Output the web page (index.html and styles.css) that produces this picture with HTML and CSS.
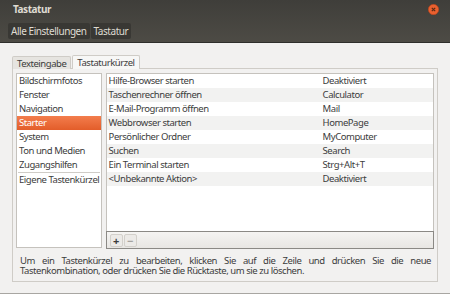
FILE: index.html
```html
<!DOCTYPE html>
<html lang="de">
<head>
    <meta charset="UTF-8">
    <title>Tastatur</title>
    <link rel="stylesheet" href="styles.css">
</head>
<body>
    <div class="window">
        <div class="header">
            <div class="titlebar">
                <span class="title">Tastatur</span>
                <span class="close">
                    <svg width="11" height="11" viewBox="0 0 11 11">
                        <circle cx="5.5" cy="5.5" r="5.2" fill="#e9602f" stroke="#b8431c" stroke-width="0.6"/>
                        <path d="M3.8 3.8 L7.2 7.2 M7.2 3.8 L3.8 7.2" stroke="#5a2a14" stroke-width="1.2"/>
                    </svg>
                </span>
            </div>
            <div class="crumbs">
                <span class="crumb">Alle Einstellungen</span>
                <span class="crumb">Tastatur</span>
            </div>
        </div>
        <div class="content">
            <div class="tabs">
                <span class="tab">Texteingabe</span>
                <span class="tab active">Tastaturkürzel</span>
            </div>
            <div class="page">
                <div class="panes">
                    <ul class="sections">
                        <li>Bildschirmfotos</li>
                        <li>Fenster</li>
                        <li>Navigation</li>
                        <li class="selected">Starter</li>
                        <li>System</li>
                        <li>Ton und Medien</li>
                        <li>Zugangshilfen</li>
                        <li class="custom">Eigene Tastenkürzel</li>
                    </ul>
                    <div class="shortcuts">
                        <div class="rows">
                            <div class="row"><span class="action">Hilfe-Browser starten</span><span class="key">Deaktiviert</span></div>
                            <div class="row"><span class="action">Taschenrechner öffnen</span><span class="key">Calculator</span></div>
                            <div class="row"><span class="action">E-Mail-Programm öffnen</span><span class="key">Mail</span></div>
                            <div class="row"><span class="action">Webbrowser starten</span><span class="key">HomePage</span></div>
                            <div class="row"><span class="action">Persönlicher Ordner</span><span class="key">MyComputer</span></div>
                            <div class="row"><span class="action">Suchen</span><span class="key">Search</span></div>
                            <div class="row"><span class="action">Ein Terminal starten</span><span class="key">Strg+Alt+T</span></div>
                            <div class="row"><span class="action">&lt;Unbekannte Aktion&gt;</span><span class="key">Deaktiviert</span></div>
                        </div>
                        <div class="toolbar">
                            <span class="tool">+</span>
                            <span class="tool dim">&minus;</span>
                        </div>
                    </div>
                </div>
                <p class="hint">Um ein Tastenkürzel zu bearbeiten, klicken Sie auf die Zeile und drücken Sie die neue Tastenkombination, oder drücken Sie die Rücktaste, um sie zu löschen.</p>
            </div>
        </div>
    </div>
</body>
</html>
```

FILE: styles.css
```css
body {
    margin: 0;
    font-family: "Noto Sans", "DejaVu Sans", sans-serif;
    font-size: 9.5px;
    letter-spacing: -0.45px;
    color: #3c3c3c;
    background: #f2f1f0;
}
.window {
    width: 450px;
    height: 294px;
    box-sizing: border-box;
    border-bottom: 1px solid #a8a6a2;
    background: #f2f1f0;
}
.header {
    height: 43px;
    background: linear-gradient(#3f3e3a, #4d4b45);
    border-bottom: 1px solid #2f2e2b;
    box-sizing: border-box;
}
.titlebar {
    height: 18px;
    display: flex;
    align-items: center;
    justify-content: space-between;
    padding: 0 11px 0 13px;
}
.title {
    color: #dfdbd2;
    font-weight: bold;
    font-size: 10px;
}
.close {
    display: flex;
}
.crumbs {
    display: flex;
    gap: 1px;
    padding-left: 8px;
    margin-top: 5px;
}
.crumb {
    height: 16px;
    line-height: 16px;
    padding: 0 3px;
    background: #393834;
    color: #dfdbd2;
    border-radius: 2px;
    font-size: 10px;
}
.content {
    padding: 12px 12px 0 12px;
}
.tabs {
    display: flex;
    height: 13px;
    gap: 1px;
}
.tab {
    padding: 0 4px;
    line-height: 13px;
    background: #e6e4e0;
    border: 1px solid #cfccc7;
    border-bottom: none;
    border-radius: 2px 2px 0 0;
    box-sizing: border-box;
    height: 13px;
    margin-top: 1px;
}
.tab.active {
    background: #f7f7f6;
    height: 14px;
    margin-top: 0;
}
.page {
    height: 214px;
    box-sizing: border-box;
    border: 1px solid #cfccc7;
    background: #f2f1f0;
    padding: 4px 3px 0 3px;
}
.panes {
    display: flex;
    gap: 4px;
}
.sections {
    list-style: none;
    margin: 0;
    padding: 0;
    width: 86px;
    height: 175px;
    box-sizing: border-box;
    background: #fff;
    border: 1px solid #c5c2bd;
}
.sections li {
    height: 14px;
    line-height: 14px;
    padding-left: 2px;
    white-space: nowrap;
}
.sections li.selected {
    background: linear-gradient(#f37d4d, #e35d2a);
    color: #fff;
}
.sections li.custom {
    border-top: 1px solid #cfccc7;
    margin: 0 1px;
    padding-left: 1px;
}
.shortcuts {
    width: 330px;
    height: 176px;
    display: flex;
    flex-direction: column;
}
.rows {
    flex: 1;
    background: #fff;
    border: 1px solid #c5c2bd;
    border-bottom: none;
}
.row {
    height: 14px;
    line-height: 14px;
    display: flex;
    padding-left: 2px;
}
.row:nth-child(even) {
    background: #f2f2f1;
}
.action {
    width: 214px;
}
.toolbar {
    height: 18px;
    box-sizing: border-box;
    border: 1px solid #8b8985;
    background: linear-gradient(#f5f4f2, #e8e6e3);
    display: flex;
    align-items: center;
    gap: 1px;
    padding-left: 3px;
}
.tool {
    width: 11px;
    height: 11px;
    line-height: 11px;
    text-align: center;
    font-weight: bold;
    font-size: 11px;
    letter-spacing: 0;
    border: 1px solid #d3d0cb;
    border-radius: 2px;
    background: #eceae7;
    color: #3c3c3c;
}
.tool.dim {
    color: #a5a39f;
}
.hint {
    margin: 7px 3px 0 4px;
    line-height: 10px;
    text-align: justify;
}
```
